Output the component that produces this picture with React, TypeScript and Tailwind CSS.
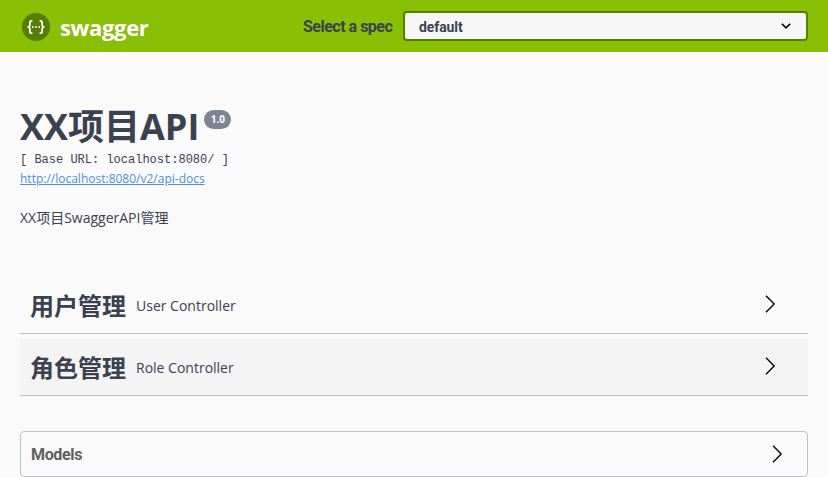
import React from "react";

const heading = "font-['Roboto','Noto_Sans_CJK_SC',sans-serif] font-bold";
const body = "font-['Open_Sans','Noto_Sans_CJK_SC',sans-serif]";

function Chevron() {
  return (
    <svg width="20" height="20" viewBox="0 0 20 20" className="shrink-0 text-black">
      <path d="M6 1.7 L14.2 10 L6 18.3" fill="none" stroke="currentColor" strokeWidth="1.35" />
    </svg>
  );
}

function Logo() {
  return (
    <svg width="30" height="30" viewBox="0 0 30 30" className="shrink-0">
      <circle cx="15" cy="15" r="14.1" fill="#547f00" />
      <g fill="none" stroke="#fff" strokeWidth="1.7">
        <path d="M11.4 8.8 H10.6 Q8.9 8.8 8.9 10.6 V12.8 Q8.9 14.8 6.6 15 Q8.9 15.2 8.9 17.2 V19.4 Q8.9 21.2 10.6 21.2 H11.4" />
        <path d="M18.6 8.8 H19.4 Q21.1 8.8 21.1 10.6 V12.8 Q21.1 14.8 23.4 15 Q21.1 15.2 21.1 17.2 V19.4 Q21.1 21.2 19.4 21.2 H18.6" />
      </g>
      <g fill="#fff">
        <circle cx="11.8" cy="15" r="0.95" />
        <circle cx="15" cy="15" r="0.95" />
        <circle cx="18.2" cy="15" r="0.95" />
      </g>
    </svg>
  );
}

function TagRow({ name, description, shaded }: { name: string; description: string; shaded?: boolean }) {
  return (
    <div className={`flex h-[57px] items-center border-b border-[#bfbfc1] pt-0.5 pl-2.5 pr-7 ${shaded ? "bg-[#f4f4f4]" : ""}`}>
      <h2 className={`${body} text-2xl leading-8 font-bold`}>{name}</h2>
      <span className={`${body} ml-2.5 flex-1 text-sm leading-5`}>{description}</span>
      <div className="pb-1">
        <Chevron />
      </div>
    </div>
  );
}

export default function App() {
  return (
    <div className="h-[477px] overflow-hidden bg-[#fafafa] text-[#3b4151]">
      <header className="flex h-[52px] items-center bg-[#89bf04] px-5">
        <div className="flex w-[283px] items-center pt-px pl-px">
          <Logo />
          <span className={`${body} ml-[9px] text-[22px] leading-7 font-bold tracking-[-0.35px] text-white`}>swagger</span>
        </div>
        <span className={`${heading} w-[100px] pt-0.5 text-base leading-6 tracking-[-0.5px] whitespace-nowrap`}>Select a spec</span>
        <div className="flex h-[30px] flex-1 items-center justify-between rounded border-2 border-[#547f00] bg-[#f7f7f7] pr-3.5 pl-[14px]">
          <span className={`${heading} pt-0.5 text-sm tracking-[-0.1px]`}>default</span>
          <svg width="12" height="12" viewBox="0 0 12 12" className="text-black">
            <path d="M1.8 3.7 L6 7.8 L10.2 3.7" fill="none" stroke="currentColor" strokeWidth="1.6" />
          </svg>
        </div>
      </header>
      <main className="px-5">
        <section className="h-[219px] pt-[50px]">
          <div className="flex h-12 items-start">
            <h1 className={`${body} text-4xl leading-[50px] font-bold whitespace-nowrap`}>XX项目API</h1>
            <span className={`${body} mt-2 ml-[5px] flex h-[19px] w-[27px] items-center justify-center rounded-full bg-[#7d8492] text-[10px] font-bold text-white`}>1.0</span>
          </div>
          <pre className="mt-0.5 font-['Liberation_Mono',monospace] text-xs leading-4">[ Base URL: localhost:8080/ ]</pre>
          <a className={`${body} mt-[3px] block text-xs leading-4 text-[#4990e2] underline`}>http://localhost:8080/v2/api-docs</a>
          <p className={`${body} mt-[21px] text-sm leading-5`}>XX项目SwaggerAPI管理</p>
        </section>
        <section className="flex flex-col gap-[5px] pt-[6px]">
          <TagRow name="用户管理" description="User Controller" />
          <TagRow name="角色管理" description="Role Controller" shaded />
        </section>
        <section className="mt-[35px] flex h-[46px] items-center justify-between rounded border border-[#bfc0c4] pr-5 pl-2.5">
          <h4 className={`${heading} pt-0.5 text-base tracking-[-0.35px] text-[#606060]`}>Models</h4>
          <Chevron />
        </section>
      </main>
    </div>
  );
}
